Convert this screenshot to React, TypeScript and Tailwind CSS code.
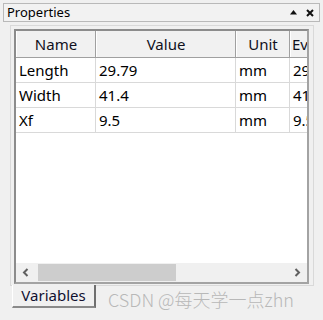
const columns = [
  { title: "Name", width: "w-[80px]", align: "justify-center" },
  { title: "Value", width: "w-[140px]", align: "justify-center" },
  { title: "Unit", width: "w-[54px]", align: "justify-center" },
  { title: "Eval", width: "w-[70px]", align: "justify-start pl-[1px]" },
]

const rows = [
  ["Length", "29.79", "mm", "29.79"],
  ["Width", "41.4", "mm", "41.4"],
  ["Xf", "9.5", "mm", "9.5"],
]

const TitleBar = () => (
  <div className="mx-[3px] mt-[3px] h-[19px] border border-[#b9b9b9] bg-[#f2f2f2] flex items-center justify-between pl-[3px] pr-[5px]">
    <span className="text-[13px] leading-none text-black">Properties</span>
    <div className="flex items-center gap-[9px]">
      <svg width="7" height="5" viewBox="0 0 7 5">
        <path d="M3.5 0 L7 4.5 L0 4.5 Z" fill="#111" />
      </svg>
      <svg width="8" height="8" viewBox="0 0 8 8">
        <path d="M1 1 L7 7 M7 1 L1 7" stroke="#111" strokeWidth="2" />
      </svg>
    </div>
  </div>
)

const Header = () => (
  <div className="flex h-[27px] shrink-0 border-b border-[#a0a0a0] bg-[#f1f1f1]">
    {columns.map((c) => (
      <div
        key={c.title}
        className={`${c.width} ${c.align} shrink-0 flex items-center border-r border-[#a0a0a0] border-l border-l-white text-[15px] text-[#101020]`}
      >
        {c.title}
      </div>
    ))}
  </div>
)

const Row = ({ cells }: { cells: string[] }) => (
  <div className="flex h-[25px] shrink-0 border-b border-[#d9d9d9]">
    {cells.map((v, i) => (
      <div
        key={i}
        className={`${columns[i]!.width} shrink-0 flex items-center pl-[3px] border-r border-[#d9d9d9] text-[15px] text-black`}
      >
        {v}
      </div>
    ))}
  </div>
)

const HScrollBar = () => (
  <div className="h-[19px] shrink-0 bg-[#f0f0f0] flex items-center">
    <div className="w-[19px] h-full flex items-center justify-center shrink-0">
      <svg width="7" height="9" viewBox="0 0 7 9">
        <path d="M5.5 1 L2 4.5 L5.5 8" stroke="#606060" strokeWidth="2" fill="none" />
      </svg>
    </div>
    <div className="flex-1 h-full py-[1px]">
      <div className="w-[138px] ml-[3px] h-full bg-[#cdcdcd]" />
    </div>
    <div className="w-[19px] h-full flex items-center justify-center shrink-0">
      <svg width="7" height="9" viewBox="0 0 7 9">
        <path d="M1.5 1 L5 4.5 L1.5 8" stroke="#606060" strokeWidth="2" fill="none" />
      </svg>
    </div>
  </div>
)

export default function App() {
  return (
    <div
      className="w-[323px] h-[320px] bg-[#f0f0f0] flex flex-col overflow-hidden"
      style={{ fontFamily: '"Noto Sans", "Noto Sans CJK SC", sans-serif' }}
    >
      <TitleBar />
      <div className="ml-[10px] mt-[3px] w-[304px] h-[261px] border border-[#d9d9d9] pl-[3px] pr-[4px] pt-[3px] pb-[1px] flex flex-col">
        <div className="flex-1 border-2 border-[#a3a3a3] border-l-[#8c8c8c] border-t-[#8c8c8c] bg-white flex flex-col overflow-hidden">
          <div className="flex-1 overflow-hidden flex flex-col">
            <div className="w-[344px] flex flex-col">
              <Header />
              {rows.map((r) => (
                <Row key={r[0]} cells={r} />
              ))}
            </div>
          </div>
          <HScrollBar />
        </div>
      </div>
      <div className="flex items-start">
        <div className="ml-[12px] -mt-[1px] w-[84px] h-[23px] bg-[#f0f0f0] border-l border-l-white border-r-2 border-r-[#6f6f6f] border-b-2 border-b-[#8a8a8a] flex items-center justify-center text-[15px] text-[#101030]">
          Variables
        </div>
        <div
          className="ml-[12px] mt-[2px] text-[18px] leading-[22px] font-light text-[#b8b8b8]"
          style={{ fontFamily: '"Noto Sans CJK SC", sans-serif' }}
        >
          CSDN @每天学一点zhn
        </div>
      </div>
    </div>
  )
}
